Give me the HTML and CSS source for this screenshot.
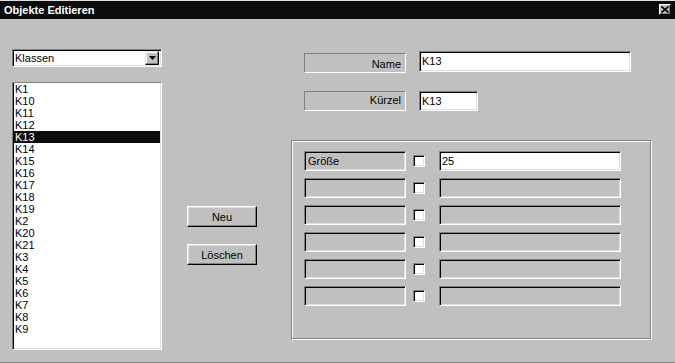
FILE: index.html
```html
<!DOCTYPE html>
<html lang="de">
<head>
<meta charset="utf-8">
<title>Objekte Editieren</title>
<link rel="stylesheet" href="styles.css">
</head>
<body>
<div class="window">
  <div class="titlebar">
    <span class="title">Objekte Editieren</span>
    <span class="close"><svg width="8" height="7" viewBox="0 0 8 7"><path d="M0.5 0.5 L7.5 6.5 M7.5 0.5 L0.5 6.5" stroke="#000" stroke-width="1.6" fill="none"/></svg></span>
  </div>
  <div class="client">
    <div class="left">
      <div class="combo">
        <span class="combo-text">Klassen</span>
        <span class="combo-btn"><svg width="7" height="4" viewBox="0 0 7 4"><path d="M0 0 H7 L3.5 4 Z" fill="#000"/></svg></span>
      </div>
      <ul class="list">
        <li>K1</li><li>K10</li><li>K11</li><li>K12</li><li class="sel">K13</li><li>K14</li><li>K15</li><li>K16</li><li>K17</li><li>K18</li><li>K19</li><li>K2</li><li>K20</li><li>K21</li><li>K3</li><li>K4</li><li>K5</li><li>K6</li><li>K7</li><li>K8</li><li>K9</li>
      </ul>
    </div>
    <div class="buttons">
      <div class="btn">Neu</div>
      <div class="btn">Löschen</div>
    </div>
    <div class="right">
      <div class="field-row row-name">
        <div class="static static-right">Name</div>
        <div class="edit edit-name">K13</div>
      </div>
      <div class="field-row row-short">
        <div class="static static-right">Kürzel</div>
        <div class="edit edit-short">K13</div>
      </div>
      <div class="group">
        <div class="attr-row"><div class="attr-label">Größe</div><div class="check"></div><div class="attr-value filled">25</div></div>
        <div class="attr-row"><div class="attr-label"></div><div class="check"></div><div class="attr-value"></div></div>
        <div class="attr-row"><div class="attr-label"></div><div class="check"></div><div class="attr-value"></div></div>
        <div class="attr-row"><div class="attr-label"></div><div class="check"></div><div class="attr-value"></div></div>
        <div class="attr-row"><div class="attr-label"></div><div class="check"></div><div class="attr-value"></div></div>
        <div class="attr-row"><div class="attr-label"></div><div class="check"></div><div class="attr-value"></div></div>
      </div>
    </div>
  </div>
</div>
</body>
</html>
```

FILE: styles.css
```css
* { box-sizing: border-box; }
html, body { margin: 0; padding: 0; }
body {
  width: 675px;
  height: 363px;
  background: #c0c0c0;
  font-family: "Liberation Sans", Arial, sans-serif;
  font-size: 11px;
  color: #000;
  overflow: hidden;
}
.window {
  width: 675px;
  height: 363px;
  border-top: 1px solid #dfdfdf;
  border-bottom: 1px solid #808080;
  display: flex;
  flex-direction: column;
}
.titlebar {
  height: 18px;
  background: #0c0c0c;
  display: flex;
  align-items: flex-start;
  justify-content: space-between;
  padding: 0 4px 0 4px;
}
.title {
  color: #fff;
  font-weight: bold;
  font-size: 11px;
  line-height: 18px;
}
.close {
  margin-top: 3px;
  width: 12px;
  height: 11px;
  background: #c0c0c0;
  border: 1px solid;
  border-color: #fff #000 #000 #fff;
  box-shadow: inset -1px -1px #808080;
  display: flex;
  align-items: center;
  justify-content: center;
}
.client {
  flex: 1;
  display: flex;
  padding-left: 12px;
}
.left {
  width: 150px;
  padding-top: 30px;
  display: flex;
  flex-direction: column;
}
.combo {
  height: 18px;
  background: #fff;
  border: 1px solid;
  border-color: #808080 #fff #fff #808080;
  box-shadow: inset 1px 1px #000, inset -1px -1px #dfdfdf;
  display: flex;
  align-items: center;
  justify-content: space-between;
  padding: 0 2px 0 2px;
}
.combo-text { line-height: 14px; padding-left: 0; }
.combo-btn {
  width: 14px;
  height: 14px;
  background: #c0c0c0;
  border: 1px solid;
  border-color: #dfdfdf #000 #000 #dfdfdf;
  box-shadow: inset -1px -1px #808080, inset 1px 1px #fff;
  display: flex;
  align-items: center;
  justify-content: center;
}
.list {
  list-style: none;
  margin: 15px 0 0 0;
  padding: 0 1px 0 1px;
  height: 268px;
  background: #fff;
  border: 1px solid;
  border-color: #808080 #fff #fff #808080;
  box-shadow: inset 1px 0 #000, inset -1px -1px #dfdfdf;
}
.list li {
  height: 12px;
  line-height: 12px;
  padding-left: 1px;
}
.list li.sel {
  background: #0c0c0c;
  color: #fff;
}
.buttons {
  width: 70px;
  margin-left: 25px;
  padding-top: 187px;
  display: flex;
  flex-direction: column;
  gap: 17px;
}
.btn {
  height: 21px;
  border: 1px solid;
  border-color: #fff #000 #000 #fff;
  box-shadow: inset -1px -1px #808080, inset 1px 1px #dfdfdf;
  display: flex;
  align-items: center;
  justify-content: center;
  line-height: 12px;
}
.right {
  margin-left: 34px;
  display: flex;
  flex-direction: column;
}
.field-row {
  display: flex;
  align-items: flex-start;
  padding-left: 13px;
  gap: 13px;
}
.row-name { margin-top: 32px; }
.row-short { margin-top: 18px; }
.static {
  width: 102px;
  height: 20px;
  border: 1px solid;
  border-color: #808080 #fff #fff #808080;
  line-height: 12px;
  padding: 2px 4px 0 4px;
}
.row-name .static { margin-top: 2px; padding-top: 4px; }
.static-right { text-align: right; }
.edit {
  height: 21px;
  background: #fff;
  border: 1px solid;
  border-color: #808080 #fff #fff #808080;
  box-shadow: inset 1px 1px #000, inset -1px -1px #dfdfdf;
  padding: 3px 2px 0 2px;
  line-height: 12px;
}
.edit-name { width: 212px; }
.edit-short { width: 59px; height: 20px; }
.group {
  margin-top: 29px;
  width: 360px;
  height: 199px;
  border: 1px solid #808080;
  box-shadow: inset 1px 1px #fff, 1px 1px #fff;
  padding: 10px 0 0 12px;
  display: flex;
  flex-direction: column;
  gap: 7px;
}
.attr-row {
  display: flex;
  align-items: center;
  height: 20px;
}
.attr-label {
  width: 102px;
  height: 20px;
  border: 1px solid;
  border-color: #808080 #fff #fff #808080;
  box-shadow: inset 1px 1px #000, inset -1px -1px #dfdfdf;
  padding: 3px 3px 0 3px;
  line-height: 12px;
}
.check {
  width: 12px;
  height: 12px;
  margin-left: 7px;
  background: #fff;
  border: 1px solid;
  border-color: #808080 #fff #fff #808080;
  box-shadow: inset 1px 1px #000, inset -1px -1px #dfdfdf;
}
.attr-value {
  width: 182px;
  height: 20px;
  margin-left: 14px;
  border: 1px solid;
  border-color: #808080 #fff #fff #808080;
  box-shadow: inset 1px 1px #000, inset -1px -1px #dfdfdf;
  padding: 3px 2px 0 2px;
  line-height: 12px;
}
.attr-value.filled { background: #fff; }
```
